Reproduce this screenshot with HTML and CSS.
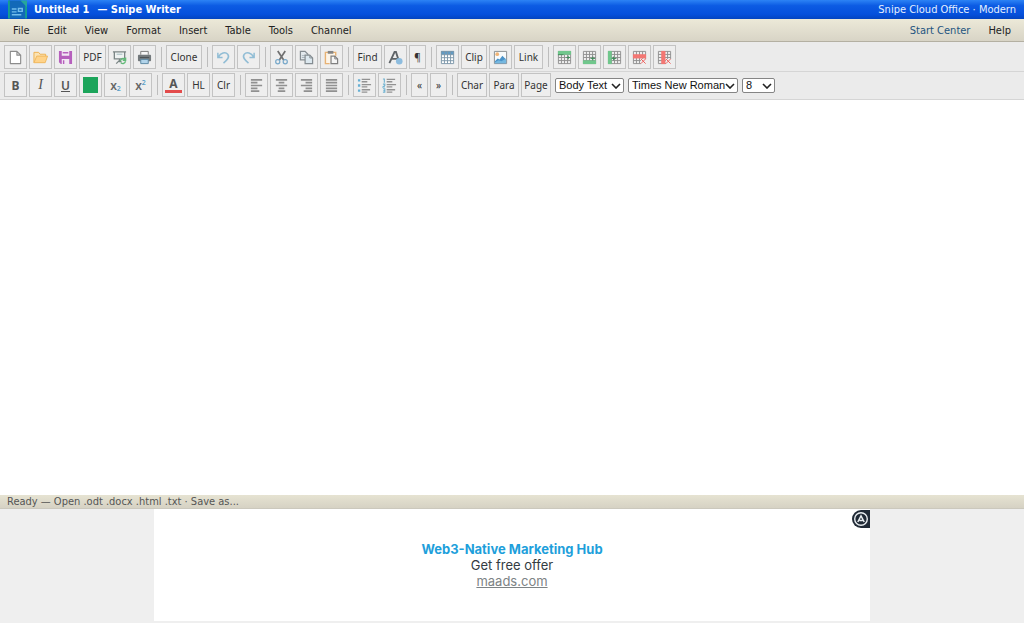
FILE: index.html
```html
<!DOCTYPE html>
<html lang="en">
<head>
<meta charset="utf-8">
<title>Untitled 1 — Snipe Writer</title>
<meta name="viewport" content="width=device-width, initial-scale=1">
<link rel="stylesheet" href="styles.css">
</head>
<body>
<svg class="sprite" aria-hidden="true">
  <symbol id="grid" viewBox="0 0 16 16"><path d="M1.500 1.500h13v13h-13zM1.500 4.750h13M1.500 8h13M1.500 11.250h13M4.750 1.500v13M8 1.500v13M11.250 1.500v13" fill="none" stroke="#8f8f8f"/></symbol>
  <symbol id="chevron" viewBox="0 0 10 6"><path d="M1 1l4 4 4-4" fill="none" stroke="#222" stroke-width="1.600"/></symbol>
</svg>
<header class="titlebar">
  <svg class="logo" viewBox="0 0 20 19" aria-hidden="true"><path d="M1 0h13l5 5v14H1z" fill="#1269b8"/><path d="M1 0v19M19 5v14" stroke="#159e91" stroke-width="2"/><path d="M13 0l7 7V0z" fill="#26a69a"/><path d="M4 9h5M4 12h5M11 8.500h4v3h-4zM4 15h10" fill="none" stroke="#72bdec" stroke-width="1.500"/></svg>
  <h1 class="doc-title"><span>Untitled 1</span><span>— Snipe Writer</span></h1>
  <span class="edition">Snipe Cloud Office · Modern</span>
</header>
<nav class="menubar">
  <button class="menu">File</button><button class="menu">Edit</button><button class="menu">View</button><button class="menu">Format</button><button class="menu">Insert</button><button class="menu">Table</button><button class="menu">Tools</button><button class="menu">Channel</button>
  <a class="menu start" href="#">Start Center</a><button class="menu">Help</button>
</nav>
<div class="toolbar main-tools">
  <button class="tool" aria-label="New"><svg viewBox="0 0 16 16"><path d="M2.500 1.500h7l4 4v9h-11zM9.500 1.500v4h4" fill="#fff" stroke="#8c8c8c" stroke-width="1.200" stroke-linejoin="round"/></svg></button>
  <button class="tool" aria-label="Open"><svg viewBox="0 0 16 16"><path d="M1 13.500V2.500h5l1.500 2h6V7" fill="#fbe3b3" stroke="#edb04f"/><path d="M1 13.500L4 6.500h11.500l-2.500 7z" fill="#ffd389" stroke="#efb65c"/></svg></button>
  <button class="tool" aria-label="Save"><svg viewBox="0 0 16 16"><path d="M1 1h14v14H3l-2-2z" fill="#b660bd"/><path d="M4 1h8v5H4zM4 9.500h8V15H4z" fill="#f2e8f4"/><path d="M5 3h6M6 11v4" stroke="#b660bd" stroke-width="1.500"/></svg></button>
  <button class="tool w27">PDF</button>
  <button class="tool" aria-label="Export"><svg viewBox="0 0 16 16"><path d="M1 2h14M2.500 2.500v7h11v-7M8 10v3M4.500 14.500L8 11l2 2" fill="#eef2f2" stroke="#7b8585" stroke-width="1.400"/><path d="M5 4.500h6" stroke="#9db7bb"/><path d="M9 12c0-3 3-4 5-2M14.500 8v3h-3M14.500 12c-1 3-3.500 3-5 1.500" fill="none" stroke="#62ba78" stroke-width="1.500"/></svg></button>
  <button class="tool" aria-label="Print"><svg viewBox="0 0 16 16"><path d="M4 5V1.500h8V5" fill="#f8f8f8" stroke="#777"/><rect x="1" y="5" width="14" height="7" rx="1" fill="#73797c"/><path d="M3 8h10" stroke="#4b5054"/><path d="M4 10h8v4.500H4z" fill="#b2d4ea" stroke="#5b87a3"/></svg></button>
  <span class="sep"></span>
  <button class="tool w36">Clone</button>
  <span class="sep"></span>
  <button class="tool" aria-label="Undo"><svg viewBox="0 0 16 16"><path d="M2 3v5h5M2.500 7.500C5 3 10 1.500 12.500 4.500c2.500 3-.5 6-4.500 9.500" fill="none" stroke="#91bdd5" stroke-width="1.600"/></svg></button>
  <button class="tool" aria-label="Redo"><svg viewBox="0 0 16 16"><path d="M14 3v5H9M13.500 7.500C11 3 6 1.500 3.500 4.500c-2.500 3 .5 6 4.500 9.500" fill="none" stroke="#91bdd5" stroke-width="1.600"/></svg></button>
  <span class="sep"></span>
  <button class="tool" aria-label="Cut"><svg viewBox="0 0 16 16"><path d="M4 1l6.500 10M12 1L5.500 11" stroke="#707070" stroke-width="1.800"/><circle cx="4" cy="12.500" r="2.200" fill="none" stroke="#79a9ca" stroke-width="1.300"/><circle cx="12" cy="12.500" r="2.200" fill="none" stroke="#79a9ca" stroke-width="1.300"/></svg></button>
  <button class="tool" aria-label="Copy"><svg viewBox="0 0 16 16"><path d="M1.500 1.500h5l3 3v6h-8z" fill="#e3e9ed" stroke="#858d92" stroke-width="1.300"/><path d="M3 6h4M3 8h4" stroke="#a7b5bd"/><path d="M6.500 5.500h5l3 3v6h-8z" fill="#dce8ef" stroke="#858d92" stroke-width="1.300"/><path d="M11.500 5.500v3h3" fill="none" stroke="#858d92"/></svg></button>
  <button class="tool" aria-label="Paste"><svg viewBox="0 0 16 16"><path d="M6 14.500H1.500v-12h11V6" fill="#fcf4e8" stroke="#e8b274" stroke-width="1.500"/><path d="M4 1h6v3H4z" fill="#858585"/><path d="M7.500 6.500h4l3 3v5h-7z" fill="#f5f5f5" stroke="#808080" stroke-width="1.300"/><path d="M11.500 6.500v3h3" fill="none" stroke="#777"/></svg></button>
  <span class="sep"></span>
  <button class="tool w29">Find</button>
  <button class="tool" aria-label="Character style"><svg viewBox="0 0 16 16"><path d="M1.500 14L7 2h1.500L12 13M4 9.500h6" fill="none" stroke="#5f6468" stroke-width="2"/><circle cx="12" cy="12" r="3.500" fill="#8dbcde"/></svg></button>
  <button class="tool w17">¶</button>
  <span class="sep"></span>
  <button class="tool" aria-label="Insert table"><svg viewBox="0 0 16 16"><path d="M1.500 1.500h13v13h-13z" fill="#fff"/><path d="M1 1h14v4H1z" fill="#609bc5"/><path d="M1.500 1.500h13v13h-13zM1.500 5h13M1.500 8.200h13M1.500 11.400h13M4.750 1.500v13M8 1.500v13M11.250 1.500v13" fill="none" stroke="#7d98aa"/></svg></button>
  <button class="tool w26">Clip</button>
  <button class="tool" aria-label="Insert image"><svg viewBox="0 0 16 16"><path d="M1.500 1.500h13v13h-13z" fill="#f8fbfc" stroke="#878d90"/><circle cx="4.500" cy="4.500" r="2" fill="#f1b577"/><path d="M2 12l3-3 2 1 3-4 4 4v4H2z" fill="#4a93c9"/><path d="M2 13l4-2 3 1 5-3v5H2z" fill="#76b8e0"/></svg></button>
  <button class="tool w29">Link</button>
  <span class="sep"></span>
  <button class="tool" aria-label="Insert row above"><svg viewBox="0 0 16 16"><use href="#grid"/><path d="M1 1h14v4H1z" fill="#70c78c"/><path d="M1 5h6M10 8h4M12 6v4" stroke="#3c8b57"/></svg></button>
  <button class="tool" aria-label="Insert row below"><svg viewBox="0 0 16 16"><use href="#grid"/><path d="M1 11h14v4H1z" fill="#70c78c"/><path d="M9 9h5M11.500 7v4" stroke="#3c8b57"/></svg></button>
  <button class="tool" aria-label="Insert column"><svg viewBox="0 0 16 16"><use href="#grid"/><path d="M1 1h4v14H1z" fill="#70c78c"/><path d="M5 9h5M7 7v4" stroke="#3c8b57"/></svg></button>
  <button class="tool" aria-label="Delete row"><svg viewBox="0 0 16 16"><path d="M1.500 1.500h13v8M1.500 1.500v13h8M1.500 11.250h8M4.750 1.500v13M8 1.500v13M11.250 1.500v8" fill="none" stroke="#8f8f8f"/><path d="M1 4.500h14V9H1z" fill="#f37773"/><path d="M9.500 9.500l5 5M14.500 9.500l-5 5" stroke="#ef5955"/></svg></button>
  <button class="tool" aria-label="Delete column"><svg viewBox="0 0 16 16"><path d="M1.500 1.500h13v8M1.500 1.500v13h8M1.500 4.750h13M1.500 8h13M1.500 11.250h8M11.250 1.500v8" fill="none" stroke="#8f8f8f"/><path d="M4.500 1H9v14H4.500z" fill="#f37773"/><path d="M9.500 9.500l5 5M14.500 9.500l-5 5" stroke="#ef5955"/></svg></button>
</div>
<div class="toolbar">
  <button class="tool glyph bold">B</button>
  <button class="tool glyph italic">I</button>
  <button class="tool glyph underline">U</button>
  <button class="tool" aria-label="Highlight colour"><span class="swatch"></span></button>
  <button class="tool script">x<sub>2</sub></button>
  <button class="tool script">x<sup>2</sup></button>
  <span class="sep"></span>
  <button class="tool glyph"><span class="font-color">A</span></button>
  <button class="tool">HL</button>
  <button class="tool">Clr</button>
  <span class="sep"></span>
  <button class="tool" aria-label="Align left"><svg viewBox="0 0 16 16"><path d="M2 2h12M2 5h7M2 8h12M2 11h7M2 14h9" stroke="#909090" stroke-width="1.800"/></svg></button>
  <button class="tool" aria-label="Align centre"><svg viewBox="0 0 16 16"><path d="M2 2h12M5 5h6M2 8h12M5 11h6M4 14h8" stroke="#909090" stroke-width="1.800"/></svg></button>
  <button class="tool" aria-label="Align right"><svg viewBox="0 0 16 16"><path d="M2 2h12M7 5h7M2 8h12M7 11h7M5 14h9" stroke="#909090" stroke-width="1.800"/></svg></button>
  <button class="tool" aria-label="Justify"><svg viewBox="0 0 16 16"><path d="M2 2h12M2 5h12M2 8h12M2 11h12M2 14h12" stroke="#909090" stroke-width="1.800"/></svg></button>
  <span class="sep"></span>
  <button class="tool" aria-label="Bulleted list"><svg viewBox="0 0 16 16"><path d="M5 1.500h9M5 4h6M5 7h10M5 9.500h6M5 12.500h9M5 15h6" stroke="#929292" stroke-width="1.400"/><path d="M1 2.500h2.500M1 8h2.500M1 13.500h2.500" stroke="#67b0d4" stroke-width="2.500"/></svg></button>
  <button class="tool" aria-label="Numbered list"><svg viewBox="0 0 16 16"><path d="M5 1.500h9M5 4h6M5 7h10M5 9.500h6M5 12.500h9M5 15h6" stroke="#929292" stroke-width="1.400"/><path d="M1 1h1.500v4M1 6.500h2V8L1 9.500h2M1 11.500h2V15H1M1.500 13.300H3" fill="none" stroke="#72b4d2" stroke-width="1.200"/></svg></button>
  <span class="sep"></span>
  <button class="tool w17">«</button>
  <button class="tool w17">»</button>
  <span class="sep"></span>
  <button class="tool w30">Char</button>
  <button class="tool w30">Para</button>
  <button class="tool w30">Page</button>
  <span class="pick style"><select aria-label="Paragraph style"><option>Body Text</option></select><svg><use href="#chevron"/></svg></span>
  <span class="pick family"><select aria-label="Font"><option>Times New Roman</option></select><svg><use href="#chevron"/></svg></span>
  <span class="pick size"><select aria-label="Font size"><option>8</option></select><svg><use href="#chevron"/></svg></span>
</div>
<main class="page" contenteditable="true" aria-label="Document"></main>
<footer class="status">Ready — Open .odt .docx .html .txt · Save as...</footer>
<aside class="ad-strip">
  <div class="ad">
    <strong class="ad-title">Web3-Native Marketing Hub</strong>
    <span>Get free offer</span>
    <a class="ad-link" href="#">maads.com</a>
    <svg class="badge" viewBox="0 0 18 18" aria-hidden="true"><path d="M9 0h9v18H9A9 9 0 0 1 9 0z" fill="#202a36"/><circle cx="9" cy="9" r="6.300" fill="none" stroke="#e9edf0" stroke-width="1.400"/><path d="M5.800 12L9 5.800l3.200 6.200M7.500 10.500h3.200" fill="none" stroke="#e9edf0" stroke-width="1.500"/></svg>
  </div>
</aside>
</body>
</html>
```
FILE: styles.css
```css
* { box-sizing: border-box; }

body {
  margin: 0;
  min-height: 100vh;
  display: flex;
  flex-direction: column;
  background: #efefef;
  color: #222;
  font-family: Tahoma, "DejaVu Sans Condensed", "Noto Sans", sans-serif;
  font-size: 11px;
}

button, a { font: inherit; color: inherit; }

.sprite { display: none; }

.titlebar {
  height: 19px;
  padding: 0 8px;
  display: flex;
  align-items: center;
  color: #fff;
  background: linear-gradient(#2c83f5 0, #0c5be3 30%, #0550dc 75%, #0344c0);
}

.logo { width: 19px; height: 19px; margin-right: 7px; }

.doc-title {
  flex: 1;
  display: flex;
  gap: 8px;
  margin: 0;
  font-size: 11px;
  font-weight: 700;
}

.edition { color: #e4efff; }

.menubar {
  height: 23px;
  padding: 0 4px;
  display: flex;
  align-items: center;
  background: linear-gradient(#ece9d8, #d8d4c6);
  border-bottom: 1px solid #b4b0a2;
}

.menu {
  padding: 0 9px;
  border: 0;
  background: none;
  text-decoration: none;
}

.start { margin-left: auto; color: #245580; }

.toolbar {
  padding: 1px 4px 2px;
  display: flex;
  align-items: center;
  gap: 2px;
  background: #ebebeb;
  border-bottom: 1px solid #d5d5d5;
}

.main-tools { padding-top: 3px; }

.tool {
  width: 23px;
  height: 24px;
  padding: 0;
  display: flex;
  align-items: center;
  justify-content: center;
  border: 1px solid #c3c3c3;
  background: #eeeeee;
  font-family: "Noto Sans", sans-serif;
  font-size: 10px;
  color: #333;
}

.tool svg { width: 15px; height: 15px; }

.w17 { width: 17px; }
.w26 { width: 26px; }
.w27 { width: 27px; }
.w29 { width: 29px; }
.w30 { width: 30px; }
.w36 { width: 36px; }

.sep {
  width: 1px;
  height: 20px;
  margin: 0 2px 0 3px;
  background: #bdbdbd;
}

.glyph { font-size: 12px; font-weight: 700; color: #555; }
.italic { font-family: "Liberation Serif", serif; font-style: italic; font-weight: 400; font-size: 14px; }
.underline { font-weight: 600; text-decoration: underline; }

.swatch { width: 15px; height: 16px; background: #1ca55b; }

.script { font-size: 12px; font-weight: 600; color: #666; }
.script sub, .script sup { font-size: 7px; line-height: 7px; color: #5a9fc7; }
.script sub { align-self: flex-end; margin-bottom: 4px; }
.script sup { align-self: flex-start; margin-top: 5px; }

.font-color { line-height: 13px; border-bottom: 3px solid #e34b4b; padding: 0 4px; }

.pick { position: relative; margin-left: 2px; }

.pick select {
  display: block;
  width: 100%;
  height: 15px;
  padding: 0 3px;
  appearance: none;
  border: 1px solid #858585;
  border-radius: 2px;
  background: #fff;
  font: 11px "Liberation Sans", Arial, sans-serif;
  color: #111;
}

.pick svg {
  position: absolute;
  top: 5px;
  right: 3px;
  width: 10px;
  height: 6px;
  pointer-events: none;
}

.style { width: 69px; }
.family { width: 110px; }
.size { width: 33px; }

.page { flex: 1; background: #fff; outline: none; }

.status {
  height: 14px;
  padding: 0 7px;
  line-height: 14px;
  background: linear-gradient(#e6e3d2, #d6d2c4);
  border-bottom: 1px solid #cbc8bd;
  color: #555;
}

.ad-strip { padding: 0 15% 2px; }

.ad {
  position: relative;
  height: 112px;
  display: flex;
  flex-direction: column;
  align-items: center;
  justify-content: center;
  background: #fff;
  font-family: Inter, sans-serif;
  font-size: 13px;
  line-height: 16px;
  color: #333b42;
}

.ad-title { color: #1e9fdb; }
.ad-link { color: #7d8385; }

.badge { position: absolute; top: 1px; right: 0; width: 18px; height: 18px; }
```
